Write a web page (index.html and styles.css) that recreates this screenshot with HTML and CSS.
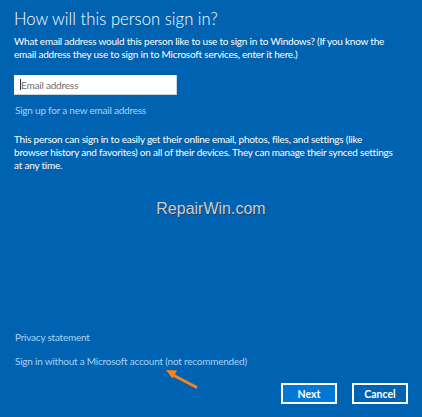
FILE: index.html
```html
<!DOCTYPE html>
<html>
<head>
<meta charset="utf-8">
<link rel="stylesheet" href="styles.css">
</head>
<body>
<div class="page">
  <h1 class="title">How will this person sign in?</h1>
  <p class="text">What email address would this person like to use to sign in to Windows? (If you know the email address they use to sign in to Microsoft services, enter it here.)</p>
  <div class="field"><span class="caret"></span><span class="placeholder">Email address</span></div>
  <a class="link signup">Sign up for a new email address</a>
  <p class="text info">This person can sign in to easily get their online email, photos, files, and settings (like browser history and favorites) on all of their devices. They can manage their synced settings at any time.</p>
  <div class="watermark">RepairWin.com</div>
  <div class="spacer"></div>
  <a class="link privacy">Privacy statement</a>
  <div class="signin-row">
    <a class="link nosign">Sign in without a Microsoft account (not recommended)</a>
    <svg class="arrow" width="40" height="24" viewBox="0 0 40 24"><path d="M33 20 L10 8" stroke="#f7841f" stroke-width="3" stroke-linecap="round" fill="none"/><path d="M3 3 L14 3.5 L9.5 11.5 Z" fill="#f7841f"/></svg>
  </div>
  <div class="buttons">
    <button class="btn primary">Next</button>
    <button class="btn">Cancel</button>
  </div>
</div>
</body>
</html>
```
FILE: styles.css
```css
html, body {
  margin: 0;
  padding: 0;
  background: #0063b1;
}
.page {
  box-sizing: border-box;
  width: 422px;
  height: 417px;
  padding: 9px 14px 0 14px;
  display: flex;
  flex-direction: column;
  font-family: Lato, "Open Sans", sans-serif;
  color: #ffffff;
}
.title {
  margin: 0;
  font-weight: 300;
  font-size: 16.6px;
  line-height: 20px;
  letter-spacing: 0.05px;
}
.text {
  margin: 6px 12px 0 0;
  font-size: 10px;
  line-height: 13px;
  letter-spacing: -0.22px;
}
.field {
  margin-top: 14px;
  width: 163px;
  height: 20px;
  box-sizing: border-box;
  background: #fff;
  border-right: 1px solid #c8d4de;
  border-bottom: 1px solid #c8d4de;
  display: flex;
  align-items: center;
  padding-left: 6px;
}
.caret {
  width: 1px;
  height: 11px;
  background: #333;
}
.placeholder {
  color: #6d6d6d;
  font-size: 10px;
  letter-spacing: -0.2px;
}
.link {
  color: #a6d2f5;
  font-size: 10px;
  letter-spacing: -0.22px;
  line-height: 13px;
  display: block;
}
.signup {
  margin-top: 9px;
  margin-left: 1px;
}
.info {
  margin-top: 16px;
}
.watermark {
  margin-top: 28px;
  align-self: center;
  font-family: "Liberation Sans", Arial, sans-serif;
  font-size: 16px;
  color: #c9ced6;
  text-shadow: 1px 1px 0 #2b3a55;
}
.spacer {
  flex: 1;
}
.privacy {
  margin-left: 1px;
}
.signin-row {
  position: relative;
  margin-top: 11px;
  margin-left: 1px;
}
.arrow {
  position: absolute;
  left: 148px;
  top: 12px;
}
.buttons {
  display: flex;
  justify-content: flex-end;
  gap: 15px;
  margin-top: 15px;
  margin-bottom: 13px;
}
.btn {
  width: 56px;
  height: 21px;
  box-sizing: border-box;
  border: 2px solid #ffffff;
  background: #0063b1;
  color: #fff;
  font-family: Lato, "Open Sans", sans-serif;
  font-size: 10.5px;
  font-weight: 700;
  padding: 0;
}
.btn.primary {
  background: #0078d7;
}
```
